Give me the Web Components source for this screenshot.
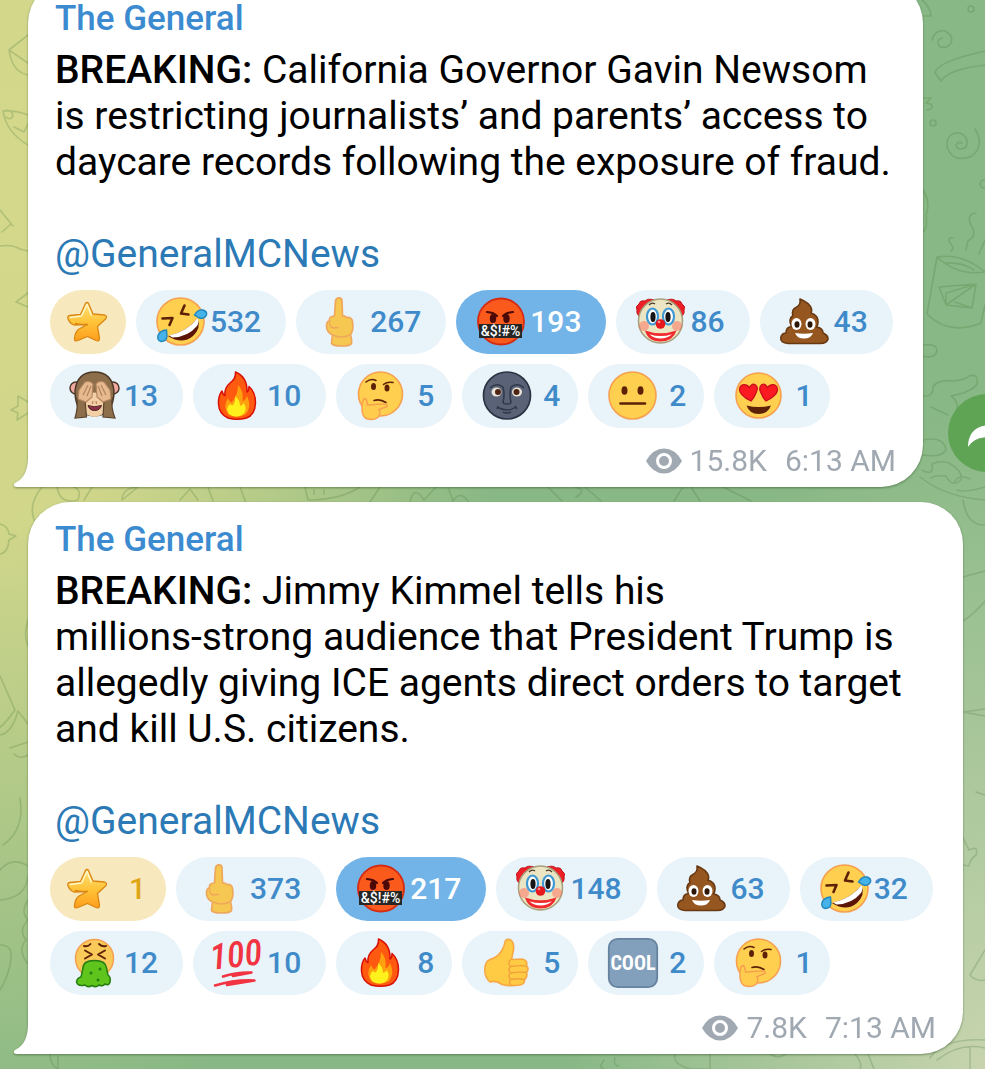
<!DOCTYPE html>
<html lang="en">
<head>
<meta charset="utf-8">
<meta name="viewport" content="width=device-width, initial-scale=1">
<title>The General</title>
<style>
  body {
    margin: 0;
    overflow: hidden;
    font-family: Roboto, "Liberation Sans", sans-serif;
  }
</style>
</head>
<body>
<chat-feed>
  <chat-message author="The General" views="15.8K" time="6:13 AM" share style="--side: 62px">
    <b>BREAKING:</b> California Governor Gavin Newsom is restricting journalists’ and parents’ access to daycare records following the exposure of fraud.<br><br><a href="#GeneralMCNews">@GeneralMCNews</a>
    <chat-reaction slot="reactions" icon="star"></chat-reaction>
    <chat-reaction slot="reactions" icon="rofl" count="532"></chat-reaction>
    <chat-reaction slot="reactions" icon="finger" count="267"></chat-reaction>
    <chat-reaction slot="reactions" icon="rage" count="193" chosen></chat-reaction>
    <chat-reaction slot="reactions" icon="clown" count="86"></chat-reaction>
    <chat-reaction slot="reactions" icon="poop" count="43"></chat-reaction>
    <chat-reaction slot="reactions" icon="monkey" count="13"></chat-reaction>
    <chat-reaction slot="reactions" icon="fire" count="10"></chat-reaction>
    <chat-reaction slot="reactions" icon="thinking" count="5"></chat-reaction>
    <chat-reaction slot="reactions" icon="moon" count="4"></chat-reaction>
    <chat-reaction slot="reactions" icon="neutral" count="2"></chat-reaction>
    <chat-reaction slot="reactions" icon="hearts" count="1"></chat-reaction>
  </chat-message>
  <chat-message author="The General" views="7.8K" time="7:13 AM" style="--side: 22px">
    <b>BREAKING:</b> Jimmy Kimmel tells his<br>millions-strong audience that President Trump is allegedly giving ICE agents direct orders to target and kill U.S. citizens.<br><br><a href="#GeneralMCNews">@GeneralMCNews</a>
    <chat-reaction slot="reactions" icon="star" count="1"></chat-reaction>
    <chat-reaction slot="reactions" icon="finger" count="373"></chat-reaction>
    <chat-reaction slot="reactions" icon="rage" count="217" chosen></chat-reaction>
    <chat-reaction slot="reactions" icon="clown" count="148"></chat-reaction>
    <chat-reaction slot="reactions" icon="poop" count="63"></chat-reaction>
    <chat-reaction slot="reactions" icon="rofl" count="32"></chat-reaction>
    <chat-reaction slot="reactions" icon="vomit" count="12"></chat-reaction>
    <chat-reaction slot="reactions" icon="hundred" count="10"></chat-reaction>
    <chat-reaction slot="reactions" icon="fire" count="8"></chat-reaction>
    <chat-reaction slot="reactions" icon="thumb" count="5"></chat-reaction>
    <chat-reaction slot="reactions" icon="cool" count="2"></chat-reaction>
    <chat-reaction slot="reactions" icon="thinking" count="1"></chat-reaction>
  </chat-message>
</chat-feed>

<script>
const FACE = `fill="#ffd04f" stroke="#f7a04f" stroke-width="1.6"`;
const INK = "#5c2107";

// every icon is drawn on a 50x50 board, the star on 40x40
const ICONS = {
  star: `<defs><linearGradient id="g" x2="0" y2="1"><stop offset="0" stop-color="#ffe37a"/><stop offset=".5" stop-color="#ffc43a"/><stop offset="1" stop-color="#ff9d1c"/></linearGradient></defs>
    <path d="M18.500 1.500Q20 -.5 21.500 1.500L26 12L37.500 13Q41 14 38.500 17L30.500 24.500L32.500 36Q32.500 40 29 38.500L20.500 34.500L11 38.500Q7 40 7.500 36.500Q8 30 12 27L20.500 22.500L7 23Q3.500 22 1.500 18Q-.5 14 3 13.500L13.500 12.500Z" fill="url(#g)" stroke="#d98613" stroke-width="1.300" stroke-linejoin="round"/>
    <path d="M2.500 15.500L14.500 14L20 2.500L24.500 13.500" fill="none" stroke="#fff6c8" stroke-width="1.500" stroke-linejoin="round"/>
    <path d="M20.500 22.500Q13 23 8 21.500" fill="none" stroke="#d98613" stroke-width="1.500"/>`,
  rofl: `<circle cx="24.500" cy="24.500" r="23.500" ${FACE}/>
    <g fill="none" stroke="${INK}" stroke-width="2.600" stroke-linecap="round" stroke-linejoin="round"><path d="M6.500 21.500L16.500 21L13.500 28"/><path d="M28.500 8.500L25 16.500L32.500 17.500"/></g>
    <path d="M12 39Q32 34 41.500 21Q45.500 31 37 39Q26 48 12 39Z" fill="#5a1506"/>
    <path d="M13 38.500Q32 34 41.500 21Q43.500 25 41 29Q32 40 16.500 40.500Z" fill="#fff"/>
    <path d="M38.500 18Q42 12 47 13Q51.500 14.500 50.500 18Q48 22.500 43.500 21Q41 19.500 38.500 18Z" fill="#45b2e8" stroke="#1f86bd" stroke-width="1.400"/>
    <path d="M10.500 33Q4 33.500 2 38.500Q1 43.500 5 44.500Q10.500 44.500 11 39.500Z" fill="#45b2e8" stroke="#1f86bd" stroke-width="1.400"/>`,
  finger: `<path d="M19.500 4Q20 .8 23 .8Q26 .8 26 4L26.500 19Q29 18.500 30.500 20.500Q36.500 20 36.500 25Q38 32 34.500 38Q36 43 35.500 46.500Q34 49 26 49Q17 49 15.500 46.500L16.500 38Q10.500 35 10.500 29Q10.500 24 13.500 24Q12.500 19 18.500 19Z" fill="#f6c851" stroke="#eea75c" stroke-width="1.700" stroke-linejoin="round"/>
    <path d="M13.500 24Q13 31 18 31Q20 30 23 31M17 38Q25 42 34 38" fill="none" stroke="#eea75c" stroke-width="1.400"/>`,
  rage: `<circle cx="25" cy="24.500" r="23" fill="#fb5a1d" stroke="#d42b12" stroke-width="1.800"/>
    <g fill="#4b0a08"><ellipse cx="17" cy="21.500" rx="3.200" ry="4.500"/><ellipse cx="30.500" cy="21.500" rx="3.200" ry="4.500"/></g>
    <path d="M11 15Q18 15.500 21 19M37 15Q30 15.500 27 19" fill="none" stroke="#4b0a08" stroke-width="2.200" stroke-linecap="round"/>
    <path d="M3 27H46V41H3Z" fill="#262626"/>
    <text x="24.500" y="39" fill="#fff" font-size="14" font-weight="500" text-anchor="middle">&amp;$!#%</text>`,
  clown: `<path d="M5 20Q0 18 1 13Q-1 9 3 7Q4 3 9 4Q12 1 18 3L8 18ZM44 20Q49 18 48 13Q50 9 46 7Q45 3 40 4Q37 1 31 3L41 18Z" fill="#ed2027" stroke="#c3151c"/>
    <circle cx="24.500" cy="24" r="22" fill="#ece5c3" stroke="#a69f79" stroke-width="1.500"/>
    <circle cx="8" cy="29" r="5" fill="#ff6c5c" opacity=".5"/><circle cx="41" cy="29" r="5" fill="#ff6c5c" opacity=".5"/>
    <g fill="#fff" stroke="#3d98d3" stroke-width="2.200"><ellipse cx="16.500" cy="19.500" rx="5.500" ry="8"/><ellipse cx="32.500" cy="19.500" rx="5.500" ry="8"/></g>
    <ellipse cx="17" cy="20" rx="2.600" ry="5" fill="#151515"/><ellipse cx="32" cy="20" rx="2.600" ry="5" fill="#151515"/>
    <path d="M13 8Q16 5 19 7M30 7Q33 5 36 8" fill="none" stroke="#4c3b2a" stroke-width="1.300"/>
    <path d="M9 33.500Q24.500 39 40.500 33.500Q37 44.500 24.500 44.500Q12 44.500 9 33.500Z" fill="#ef2b2d"/>
    <path d="M13.500 37.200Q24.500 41 36 37.200Q31 41.500 24.500 41.500Q18 41.500 13.500 37.200Z" fill="#fff"/>
    <circle cx="24.500" cy="27" r="4.800" fill="#e5181d"/><circle cx="23" cy="25" r="1.300" fill="#ff8e86"/>`,
  poop: `<path d="M20 2Q30 6 31.500 12Q32 14 31 16Q38 18 38 25Q38 28 36.500 30Q43 31 43 36Q48 38 48 42Q47 46.500 40 46.500L8 46.500Q0 46 .8 40.500Q2 36 6 36Q6 30 11.500 29.500Q8 22 13 18.500Q11 13 16 10.500Q21 8 20 2Z" fill="#96561f" stroke="#673811" stroke-width="1.600" stroke-linejoin="round"/>
    <g fill="#fff"><ellipse cx="16.500" cy="27" rx="5" ry="6"/><ellipse cx="30.500" cy="27" rx="5" ry="6"/><path d="M15 36Q24 37.500 33 36Q31 41.500 24 41.500Q17 41.500 15 36Z"/></g>
    <g fill="#2b1708"><ellipse cx="17" cy="27.500" rx="2.500" ry="3.200"/><ellipse cx="30" cy="27.500" rx="2.500" ry="3.200"/></g>`,
  monkey: `<g stroke="#4a3928" stroke-width="1.500"><circle cx="6" cy="17" r="6" fill="#f2a9a2"/><circle cx="43" cy="17" r="6" fill="#f2a9a2"/>
    <path d="M24.500 1Q42 1 44 20Q44 44 24.500 45Q5 44 5 20Q7 1 24.500 1Z" fill="#8d6e4a"/></g>
    <path d="M11 25Q24 18 38 25Q40 44 24.500 46Q9 44 11 25Z" fill="#f3cfa5"/>
    <path d="M18 34.500Q24.500 37 31.500 34.500Q30 39.500 24.500 39.500Q19.500 39.500 18 34.500Z" fill="#8e2f48" stroke="#4a2420"/>
    <g stroke="#5b442e" stroke-width="1.200"><path d="M7 27L15 29L16.500 46L5 47Q8 38 7 27ZM42 27L34 29L33 46L45 47Q41 38 42 27Z" fill="#8d6e4a"/></g>
    <g fill="#e7b98e" stroke="#b28460" stroke-width="1.100"><path d="M9 19L15 11Q20 9 23 13L22 26L16 31L8 28Z"/><path d="M40 19L34 11Q29 9 26 13L27 26L33 31L41 28Z"/></g>
    <path d="M13 24L18 14M17 25L21 15M36 24L31 14M32 25L28 15M23 30L22.500 33M26 30L26.500 33" fill="none" stroke="#b28460" stroke-width="1.200"/>`,
  fire: `<path d="M22.500 1Q34.500 6 34 21Q36 20 36 15.500Q42.500 21 42.500 32Q42 44 33.500 47Q24 49.500 15 47Q6 43 5.500 33Q5 25 9 20Q10 24 12 24.500Q11 17 17 12Q23 8 22.500 1Z" fill="#ff5a0f" stroke="#d90f05" stroke-width="1.500" stroke-linejoin="round"/>
    <path d="M25 14Q31 20 29.500 30Q32 30 34 25Q39 35 33 43Q25 48 16 44Q9 36 15 27Q17 32 19 31Q25 24 25 14Z" fill="#ffa00f"/>
    <path d="M22 25Q27 29 27 35Q30 34 31 32Q35 40 29 44Q22 47.500 16 43Q12 37 17 33Q19 35 20 34Q23 30 22 25Z" fill="#fff21c"/>`,
  thinking: `<circle cx="24.500" cy="23" r="22" ${FACE}/>
    <g fill="${INK}"><ellipse cx="17.500" cy="15.500" rx="2.500" ry="3.500"/><ellipse cx="31" cy="17" rx="2.500" ry="3.500"/></g>
    <path d="M10 11Q15 7 20 9.500M27.500 13.500Q31 10.500 37 11.500M18 29.500Q24 27.500 30 31.500" fill="none" stroke="${INK}" stroke-width="1.600" stroke-linecap="round"/>
    <path d="M7.500 28Q11 26 11.500 34L27 33Q32 32.500 31 35.500L23 38.500Q25 41 22.500 46Q18 50 10 47.500Q6 45 6 38Q5.500 32 7.500 28Z" fill="#ffcc4d" stroke="#f7a04f" stroke-width="1.500"/>`,
  moon: `<circle cx="25" cy="24.500" r="23.500" fill="#596276" stroke="#2b3342" stroke-width="1.700"/>
    <ellipse cx="14.500" cy="21" rx="5" ry="4.500" fill="#e9e4da"/><ellipse cx="35" cy="21" rx="5" ry="4.500" fill="#e9e4da"/>
    <circle cx="16" cy="21" r="3" fill="#4b2412"/><circle cx="34.500" cy="21" r="3" fill="#4b2412"/>
    <path d="M8 17Q14 11 21 16Q23 24 21 31Q21 33 25 33Q29 33 29 31Q27 24 29 16Q36 11 42 17M15 36Q25 42 34 36M16 35L15 38M33 35L35 38M21 41Q25 43 29 41" fill="none" stroke="#303949" stroke-width="1.500"/>`,
  neutral: `<circle cx="24.500" cy="24.500" r="23.500" ${FACE}/>
    <g fill="${INK}"><ellipse cx="16.500" cy="19.500" rx="3" ry="4.300"/><ellipse cx="32.500" cy="19.500" rx="3" ry="4.300"/></g>
    <path d="M12.500 32.500H37" stroke="${INK}" stroke-width="2.600" stroke-linecap="round"/>`,
  hearts: `<circle cx="24.500" cy="24.500" r="22.500" ${FACE}/>
    <g fill="#fb1a22" stroke="#c90e1b" stroke-width="1.300"><path d="M17 30Q5 24 5.500 18Q6.500 12.500 12 14Q14 14.500 15.500 16.500Q18 12 21 13.500Q25 16 22 22Q20 27 17 30Z"/>
    <path d="M32 30Q44 24 43.500 18Q42.500 12.500 37 14Q35 14.500 33.500 16.500Q31 12 28 13.500Q24 16 27 22Q29 27 32 30Z"/></g>
    <path d="M12.500 34.500Q24.500 37.500 37 34.500Q34 43 24.500 43Q15.500 43 12.500 34.500Z" fill="${INK}"/>`,
  vomit: `<circle cx="24.500" cy="20.500" r="19" fill="#f9c95a" stroke="#f7a04f" stroke-width="1.500"/>
    <path d="M15 12.500L22 16.500L15 20.500M35 12.500L28 16.500L35 20.500M14 8Q18 9 20.500 6M36 8Q32 9 29 6" fill="none" stroke="${INK}" stroke-width="1.900" stroke-linecap="round" stroke-linejoin="round"/>
    <path d="M13 30Q13 22.500 24.500 22.500Q36 22.500 36.500 30L38 37Q41 39 40 44Q39 48 35 46Q33 49 29 47Q26 50 22 47.500Q18 50 15 47Q8 49 6.500 44Q7 40 11 39Z" fill="#5fc41c" stroke="#267d12" stroke-width="1.500"/>
    <g fill="#267d12"><circle cx="21" cy="35" r="1.500"/><circle cx="30" cy="31" r="1.500"/><circle cx="28" cy="42" r="1.500"/></g>`,
  hundred: `<text x="24" y="29" transform="rotate(-6 24 29)" fill="#f23341" font-family="'Roboto Condensed', Roboto" font-size="36" font-style="italic" font-weight="500" text-anchor="middle">100</text>
    <path d="M10 38.500Q24 34 38.500 34.500L20 38M2 47.500Q22 41.500 41.500 42.500L14 47" fill="none" stroke="#f23341" stroke-width="2.600" stroke-linecap="round" stroke-linejoin="round"/>`,
  thumb: `<path d="M23 4Q24 .5 28 1.500Q32.500 4 31.500 12L29.500 21.500L40 21Q46 22 44.500 27.500Q47.500 31 44.500 34.500Q46 39 42.500 41.500Q43 46 38 47Q27 48.500 20 46.500Q14 42 8 44Q2 39 3 30Q3.500 23 8 21.500Q15 20 19.500 13Q22.500 8 23 4Z" fill="#ffcb45" stroke="#f7a845" stroke-width="1.600" stroke-linejoin="round"/>
    <path d="M44.500 28Q36 27 29 28.500Q25 26 28.500 21.500M44.500 34.500Q36 33.500 29 35Q25 32 28.500 28.500M42.500 41.500Q35 40 29 41.500Q25 38 28.500 35M29 41.500Q26 44 29 47" fill="none" stroke="#f2a03c" stroke-width="1.400"/>`,
  cool: `<rect x=".8" y=".8" width="48.400" height="48.400" rx="9" fill="#829fbc" stroke="#66829f" stroke-width="1.800"/>
    <text x="25" y="32" fill="#fff" font-family="'Roboto Condensed', Roboto" font-size="20" font-weight="700" text-anchor="middle">COOL</text>`,
};

class ChatFeed extends HTMLElement {
  constructor() {
    super();
    this.attachShadow({ mode: "open" });
    this.shadowRoot.innerHTML = `
      <style>
      :host {
        display: block;
        position: relative;
        min-height: 100vh;
        box-sizing: border-box;
        overflow: hidden;
        background:
          radial-gradient(ellipse 520px 960px at 0 180px, #d4d88b 0%, #d0d68a 36%, rgba(208, 214, 138, 0) 100%),
          radial-gradient(ellipse 420px 660px at 100% 100%, #c7d4ae 0%, rgba(199, 212, 174, 0) 100%),
          #88b885;
      }
      .doodles {
        position: absolute;
        inset: 0;
        width: 100%;
        height: 100%;
        fill: none;
        stroke: #4f7d3c;
        stroke-opacity: .26;
        stroke-width: 1.6;
        stroke-linejoin: round;
        stroke-linecap: round;
      }
      /* the feed is scrolled a little past the top of the first message */
      .list {
        position: relative;
        display: flex;
        flex-direction: column;
        gap: 15px;
        margin-top: -19px;
        padding-bottom: 15px;
      }
      </style>
      <svg class="doodles" viewBox="0 0 985 1069" preserveAspectRatio="xMidYMid slice" aria-hidden="true">
        <path d="M28 35L9 50Q12 72 28 75M9 50L28 63M28 115Q16 110 3 111Q6 132 28 145M14 127L24 132L28 124M3 111Q12 108 13 116Q10 121 6 117M0 210L13 226M2 232L11 224M0 246Q12 244 20 249L28 251M28 293L16 302L28 307M28 402L18 396L18 406L11 410L18 413L17 420L28 413"/>
        <path d="M42 487Q27 505 35 522M0 524Q8 526 9 534L16 536L9 540Q8 553 0 554M28 620Q23 635 28 646M0 676L15 710Q4 725 0 727M0 735Q12 733 18 711L28 724M14 754Q20 760 28 755M10 748L28 742M20 798Q25 830 3 845M0 870Q12 856 28 866M0 900Q26 898 28 876M28 900Q20 912 28 920Q18 930 26 940Q17 950 28 964M0 945Q13 945 11 959Q9 976 0 990"/>
        <path d="M57 487Q60 505 78 500Q82 490 74 487M92 487L84 500M122 500L138 487Q122 488 122 500M180 500L190 489L198 500M208 487L213 501M240 487L246 503M305 487L308 500Q340 500 360 487M314 490V494M324 490V494M380 487L370 502M410 502Q414 484 424 500L436 487M448 487L453 501Q460 490 468 501M548 487L562 501M575 487Q588 490 576 497M585 487L601 501M683 487L674 501M691 487L700 501M723 487L751 501"/>
        <path d="M922 0Q931 8 931 16H924M932 40Q935 29 945 31Q954 36 951 43Q946 50 939 46Q936 40 942 38M985 51Q936 62 935 73L941 81Q949 69 985 65M924 98H931L926 103Q935 104 931 109L927 110"/>
        <circle cx="971" cy="9" r="3"/><circle cx="933" cy="123" r="3"/><circle cx="984" cy="184" r="4"/>
        <path d="M975 129Q985 145 972 156Q953 164 947 147Q946 132 960 133Q970 138 966 147Q958 152 956 145Q958 141 962 143M923 190Q931 203 926 215Q928 228 923 232M953 238Q947 237 950 243Q955 248 951 251M976 213Q966 214 971 225Q978 235 968 241L966 250M985 240L979 254M937 257L927 314Q949 336 981 323L985 305M937 257Q962 253 985 272Q957 276 937 257M946 263Q962 262 974 270M939 287L976 284L972 308L946 305ZM946 293L976 284L946 305L946 293M955 302L972 308M923 345Q937 343 937 351Q935 359 923 356M923 396Q934 397 933 387Q938 379 953 381Q965 380 969 376Q979 373 977 384Q972 392 951 396Q959 402 957 410M931 407L948 415M923 440Q943 436 946 449Q944 458 923 455M922 470Q934 477 932 464Q940 460 949 463Q963 471 961 480Q952 488 946 476Q934 475 931 478M920 477Q945 497 985 500M954 483Q959 473 970 479M957 490Q965 493 985 487M963 500Q967 526 985 525"/>
        <path d="M963 577L985 571M963 621Q974 614 985 601M963 712Q974 714 985 716M963 712L985 709M976 792L985 795M963 838L969 850Q979 845 976 855Q970 859 969 866L963 865M985 950L970 975Q976 982 985 980M930 1058Q943 1038 985 1040M937 1060Q960 1042 985 1048M970 1048V1069M675 1054Q672 1064 690 1069H710V1054M770 1054Q778 1060 786 1054M855 1054Q863 1064 860 1069M868 1054L874 1069M50 1054Q50 1065 58 1069V1056M604 1060Q598 1068 604 1069M615 1058Q613 1066 619 1066"/>
      </svg>
      <main class="list"><slot></slot></main>`;
  }
}

class ChatMessage extends HTMLElement {
  constructor() {
    super();
    this.attachShadow({ mode: "open" });
    this.shadowRoot.innerHTML = `
      <style>
      :host {
        display: block;
        position: relative;
        padding: 0 var(--side) 0 28px;
      }
      .bubble {
        position: relative;
        padding: 20px 22px 8px;
        border-radius: 42px 42px 42px 0;
        background: #fff;
        filter: drop-shadow(0 1px 1px rgba(40, 70, 30, .5));
      }
      .tail {
        position: absolute;
        left: -14px;
        bottom: 0;
        width: 15px;
        height: 30px;
        fill: #fff;
      }
      .author, .text {
        margin: 0;
        padding: 0 5px;
      }
      .author {
        margin-bottom: 10px;
        color: #3c8bd0;
        font-size: 35px;
        font-weight: 500;
        line-height: 36px;
      }
      .text {
        color: #000;
        font-size: 39px;
        line-height: 46px;
      }
      ::slotted(b) {
        font-weight: 500;
      }
      ::slotted(a) {
        color: #2b7ab6;
        text-decoration: none;
      }
      .reactions {
        display: flex;
        flex-wrap: wrap;
        gap: 10px;
        margin-top: 13px;
      }
      footer {
        display: flex;
        align-items: center;
        justify-content: flex-end;
        margin-top: 15px;
        padding: 0 5px;
        color: #a0a8b1;
        font-size: 30px;
        line-height: 36px;
      }
      .eye {
        width: 36px;
        height: 26px;
        margin-right: 8px;
      }
      time {
        margin-left: 18px;
      }
      .share {
        position: absolute;
        right: -41px;
        bottom: 15px;
        width: 78px;
        height: 78px;
        padding: 0;
        border: none;
        border-radius: 50%;
        background: #5fa355;
      }
      .share svg {
        display: block;
        margin: auto;
      }
      :host(:not([share])) .share {
        display: none;
      }
      </style>
      <article class="bubble">
        <svg class="tail" viewBox="0 0 15 30" aria-hidden="true"><path d="M15 0H14Q14 20 1 26Q-1 27.500 0 29Q1 30 3 30H15Z"/></svg>
        <h2 class="author"></h2>
        <p class="text"><slot></slot></p>
        <div class="reactions"><slot name="reactions"></slot></div>
        <footer>
          <svg class="eye" viewBox="0 0 36 26" aria-hidden="true">
            <path fill="#a0a8b1" d="M18 .5Q29 .5 36 13Q29 25.500 18 25.500Q7 25.500 0 13Q7 .5 18 .5Z"/>
            <circle cx="18" cy="13" r="6.500" fill="#a0a8b1" stroke="#fff" stroke-width="3"/>
          </svg>
          <span class="views"></span><time></time>
        </footer>
      </article>
      <button class="share" type="button" aria-label="Share">
        <svg width="40" height="34" viewBox="0 0 40 34" aria-hidden="true"><path fill="#fff" d="M1 31Q1 11 22 9V1L39 14L22 28V21Q7 21 1 31Z"/></svg>
      </button>`;
  }

  connectedCallback() {
    this.shadowRoot.querySelector(".author").textContent = this.getAttribute("author");
    this.shadowRoot.querySelector(".views").textContent = this.getAttribute("views");
    this.shadowRoot.querySelector("time").textContent = this.getAttribute("time");
  }
}

class ChatReaction extends HTMLElement {
  constructor() {
    super();
    this.attachShadow({ mode: "open" });
  }

  connectedCallback() {
    const icon = this.getAttribute("icon");
    const count = this.getAttribute("count") || "";
    const board = icon === "star" ? 40 : 50;
    this.shadowRoot.innerHTML = `
      <style>
      :host {
        display: block;
      }
      button {
        display: flex;
        align-items: center;
        gap: 4px;
        height: 64px;
        padding: 0 25px 0 20px;
        border: none;
        border-radius: 32px;
        background: #e8f3fa;
        color: #3f8ac9;
        font: 500 30px/36px Roboto, "Liberation Sans", sans-serif;
        cursor: pointer;
      }
      button.short {
        gap: 11px;
        padding-right: 18px;
      }
      button.chosen {
        background: #72b3e8;
        color: #fff;
      }
      button.star {
        padding: 0 19px 0 17px;
        background: #f8e8bd;
        color: #dfa516;
      }
      button.star.short {
        gap: 22px;
        padding-right: 20px;
      }
      svg {
        display: block;
        overflow: visible;
      }
      </style>
      <button type="button" aria-label="${icon} ${count}">
        <svg width="${board}" height="${board}" viewBox="0 0 ${board} ${board}" aria-hidden="true">${ICONS[icon]}</svg>
        ${count && `<span>${count}</span>`}
      </button>`;
    const button = this.shadowRoot.querySelector("button");
    button.classList.toggle("short", count.length === 1);
    button.classList.toggle("star", icon === "star");
    button.classList.toggle("chosen", this.hasAttribute("chosen"));
    button.addEventListener("click", () => button.classList.toggle("chosen"));
  }
}

customElements.define("chat-feed", ChatFeed);
customElements.define("chat-message", ChatMessage);
customElements.define("chat-reaction", ChatReaction);
</script>
</body>
</html>
